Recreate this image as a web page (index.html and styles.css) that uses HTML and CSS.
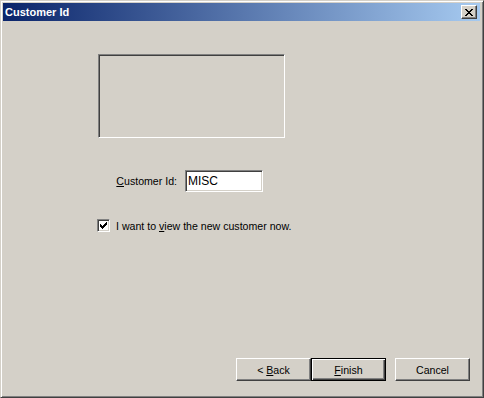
FILE: index.html
```html
<!DOCTYPE html>
<html lang="en">
<head>
  <meta charset="UTF-8">
  <title>Customer Id</title>
  <link rel="stylesheet" href="styles.css">
</head>
<body>

<div class="window">

  <!-- Title bar -->
  <div class="titlebar">
    <span class="title">Customer Id</span>
    <button class="close" aria-label="Close">
      <svg width="8" height="7" viewBox="0 0 8 7" shape-rendering="crispEdges">
        <path d="M0 0h2l2 2.5 2-2.5h2l-3 3.5 3 3.5h-2l-2-2.5-2 2.5h-2l3-3.5z" fill="#000"/>
      </svg>
    </button>
  </div>

  <!-- Client area -->
  <div class="client">
    <div class="picture"></div>

    <div class="id-row">
      <label class="id-label" for="custId"><u>C</u>ustomer Id:</label>
      <div class="field" id="custId">MISC</div>
    </div>

    <div class="check-row">
      <span class="checkbox">
        <svg width="7" height="7" viewBox="0 0 7 7" shape-rendering="crispEdges">
          <path d="M0 2h1v1h1v1h1v-1h1v-1h1v-1h1v-1h1v3h-1v1h-1v1h-1v1h-1v1h-1v-1h-1v-1h-1z" fill="#000"/>
        </svg>
      </span>
      <span class="check-label">I want to <u>v</u>iew the new customer now.</span>
    </div>

    <div class="buttons">
      <button class="btn">&lt; <u>B</u>ack</button>
      <button class="btn default"><u>F</u>inish</button>
      <button class="btn cancel">Cancel</button>
    </div>
  </div>

</div>

</body>
</html>
```

FILE: styles.css
```css
body {
  margin: 0;
  font-family: "Liberation Sans", Arial, sans-serif;
  font-size: 10.6px;
  color: #000;
  background: #d4d0c8;
}

.window {
  width: 484px;
  height: 398px;
  box-sizing: border-box;
  display: flex;
  flex-direction: column;
  background: #d4d0c8;
  border: 1px solid;
  border-color: #d4d0c8 #404040 #404040 #d4d0c8;
  box-shadow: inset 1px 1px #fff, inset -1px -1px #808080;
  padding: 2px 3px 3px 2px;
}

.titlebar {
  height: 18px;
  display: flex;
  align-items: center;
  justify-content: space-between;
  padding: 0 3px 0 2px;
  background: linear-gradient(to right, #0a246a, #a6caf0);
}

.title {
  color: #fff;
  font-weight: bold;
  font-size: 11px;
}

.close {
  width: 16px;
  height: 14px;
  padding: 0;
  display: flex;
  align-items: center;
  justify-content: center;
  background: #d4d0c8;
  border: 1px solid;
  border-color: #fff #404040 #404040 #fff;
  box-shadow: inset -1px -1px #808080;
}

.client {
  flex: 1;
  display: flex;
  flex-direction: column;
  padding: 33px 10px 13px 0;
}

.picture {
  width: 187px;
  height: 84px;
  box-sizing: border-box;
  margin-left: 95px;
  border: 1px solid;
  border-color: #808080 #fff #fff #808080;
  box-shadow: inset 1px 1px #404040, inset -1px -1px #d4d0c8;
}

.id-row {
  display: flex;
  align-items: center;
  gap: 8px;
  margin-top: 32px;
}

.id-label {
  width: 174px;
  text-align: right;
}

.field {
  width: 78px;
  height: 22px;
  box-sizing: border-box;
  padding: 2px 2px;
  font-size: 12px;
  line-height: 16px;
  background: #fff;
  border: 1px solid;
  border-color: #808080 #fff #fff #808080;
  box-shadow: inset 1px 1px #404040, inset -1px -1px #d4d0c8;
}

.check-row {
  display: flex;
  align-items: center;
  gap: 6px;
  margin-top: 27px;
  margin-left: 94px;
}

.checkbox {
  width: 13px;
  height: 13px;
  box-sizing: border-box;
  display: flex;
  align-items: center;
  justify-content: center;
  background: #fff;
  border: 1px solid;
  border-color: #808080 #fff #fff #808080;
  box-shadow: inset 1px 1px #404040, inset -1px -1px #d4d0c8;
}

.buttons {
  margin-top: auto;
  display: flex;
  justify-content: flex-end;
}

.btn {
  width: 75px;
  height: 23px;
  padding: 0;
  font-family: inherit;
  font-size: 10.6px;
  color: #000;
  background: #d4d0c8;
  border: 1px solid;
  border-color: #fff #404040 #404040 #fff;
  box-shadow: inset -1px -1px #808080, inset 1px 1px #d4d0c8;
}

.btn.default {
  border-color: #000;
  box-shadow: inset 1px 1px #fff, inset -1px -1px #404040, inset -2px -2px #808080;
}

.btn.cancel {
  margin-left: 9px;
}
```
